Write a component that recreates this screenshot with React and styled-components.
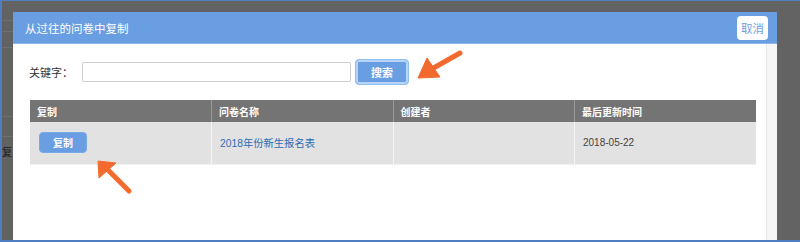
import React from "react";
import styled, { createGlobalStyle } from "styled-components";

const Global = createGlobalStyle`
  html, body { margin: 0; padding: 0; background: #636363; }
  body { font-family: "Liberation Sans", "Noto Sans CJK SC", sans-serif; }
  * { box-sizing: border-box; }
`;

const Frame = styled.div`
  position: relative;
  width: 800px;
  height: 242px;
  overflow: hidden;
  background: #636363;
  border-left: 2px solid #4f7fc2;
  border-top: 1px solid #4f7fc2;
  border-bottom: 2px solid #4f7fc2;
  display: flex;
  padding-top: 11px;
`;

const SideStrip = styled.div`
  width: 11px;
  flex: none;
  overflow: hidden;
  background:
    linear-gradient(to bottom,
      transparent 0px, transparent 8px, #6f6f6f 8px, #6f6f6f 9px,
      transparent 9px, transparent 19px, #6f6f6f 19px, #6f6f6f 20px,
      transparent 20px, transparent 35px, #6f6f6f 35px, #6f6f6f 36px,
      transparent 36px, transparent 104px, #6f6f6f 104px, #6f6f6f 105px,
      transparent 105px, transparent 124px, #6f6f6f 124px, #6f6f6f 125px,
      transparent 125px),
    #626262;
  padding-top: 132px;
`;

const BehindText = styled.div`
  font-size: 10px;
  font-weight: bold;
  color: #2a2a2a;
  white-space: nowrap;
  font-family: "Noto Sans CJK SC", sans-serif;
`;

const Modal = styled.div`
  width: 764px;
  height: 228px;
  background: #fff;
  display: flex;
  flex-direction: column;
  flex: none;
`;

const Header = styled.div`
  height: 32px;
  background: #6a9ee2;
  display: flex;
  align-items: center;
  justify-content: space-between;
  padding: 0 9px 0 12px;
  border-bottom: 1px solid #8db6ec;
`;

const Title = styled.div`
  color: #fff;
  font-size: 11.5px;
  font-family: "Noto Sans CJK SC", sans-serif;
`;

const CancelBtn = styled.button`
  background: #fff;
  border: none;
  border-radius: 4px;
  height: 24px;
  width: 31px;
  padding: 0;
  color: #6a9ee2;
  font-size: 11.5px;
  font-family: "Noto Sans CJK SC", sans-serif;
`;

const Body = styled.div`
  flex: 1;
  display: flex;
`;

const Content = styled.div`
  flex: 1;
  padding: 15px 10px 0 16px;
`;

const ScrollTrack = styled.div`
  width: 11px;
  background: #f6f6f6;
  border-left: 1px solid #e8e8e8;
`;

const SearchRow = styled.div`
  display: flex;
  align-items: center;
  height: 26px;
`;

const Label = styled.label`
  font-size: 11px;
  color: #333;
  font-family: "Noto Sans CJK SC", sans-serif;
  width: 53px;
`;

const Input = styled.input`
  width: 269px;
  height: 20px;
  border: 1px solid #d0d0d0;
  border-radius: 1px;
  padding: 0 4px;
  outline: none;
`;

const SearchBtn = styled.button`
  margin-left: 4px;
  width: 54px;
  height: 26px;
  border-radius: 4px;
  border: 1px solid #8fbff2;
  background: #6a9ee2;
  box-shadow: inset 0 0 0 2px #b7d6f7;
  color: #fff;
  font-size: 11px;
  font-weight: bold;
  font-family: "Noto Sans CJK SC", sans-serif;
  padding: 0;
`;

const Table = styled.table`
  margin-top: 15px;
  margin-left: 1px;
  width: 726px;
  border-collapse: collapse;
  table-layout: fixed;
  font-size: 10px;
`;

const Th = styled.th`
  background: #747474;
  color: #fff;
  text-align: left;
  font-weight: bold;
  height: 22px;
  padding: 0 7px;
  font-family: "Noto Sans CJK SC", sans-serif;
  border-left: 1px solid #9a9a9a;
  &:first-child { border-left: none; }
`;

const Td = styled.td`
  background: #e2e2e2;
  height: 42px;
  padding: 0 8px;
  color: #444;
  border-left: 1px solid #f4f4f4;
  border-bottom: 1px solid #f0f0f0;
  &:first-child { border-left: none; }
`;

const CopyBtn = styled.button`
  margin-left: 1px;
  width: 48px;
  height: 21px;
  border: 1px solid #7aaae6;
  border-radius: 4px;
  background: #6a9ee2;
  color: #fff;
  font-size: 10px;
  font-weight: bold;
  font-family: "Noto Sans CJK SC", sans-serif;
  padding: 0;
`;

const Link = styled.a`
  color: #2c6db3;
  text-decoration: none;
  font-size: 10.3px;
  font-family: "Liberation Sans", "Noto Sans CJK SC", sans-serif;
`;

const Arrow = styled.svg`
  position: absolute;
  left: 0;
  top: 0;
  pointer-events: none;
`;

export default function App() {
  return (
    <>
      <Global />
      <Frame>
        <SideStrip>
          <BehindText>复</BehindText>
        </SideStrip>
        <Modal>
          <Header>
            <Title>从过往的问卷中复制</Title>
            <CancelBtn>取消</CancelBtn>
          </Header>
          <Body>
            <Content>
              <SearchRow>
                <Label>关键字：</Label>
                <Input />
                <SearchBtn>搜索</SearchBtn>
              </SearchRow>
              <Table>
                <thead>
                  <tr>
                    <Th>复制</Th>
                    <Th>问卷名称</Th>
                    <Th>创建者</Th>
                    <Th>最后更新时间</Th>
                  </tr>
                </thead>
                <tbody>
                  <tr>
                    <Td>
                      <CopyBtn>复制</CopyBtn>
                    </Td>
                    <Td>
                      <Link href="#">2018年份新生报名表</Link>
                    </Td>
                    <Td />
                    <Td>2018-05-22</Td>
                  </tr>
                </tbody>
              </Table>
            </Content>
            <ScrollTrack />
          </Body>
        </Modal>
        <Arrow width="800" height="242" viewBox="0 0 800 242">
          <g fill="#f26a2e" stroke="#f26a2e" strokeLinejoin="round">
            <line x1="458" y1="52" x2="428" y2="69" strokeWidth="5" strokeLinecap="round" />
            <polygon points="416,77 425,57 438,76" strokeWidth="1" />
            <line x1="127" y1="190" x2="106" y2="169" strokeWidth="5" strokeLinecap="round" />
            <polygon points="96,160 97,177 114,162" strokeWidth="1" />
          </g>
        </Arrow>
      </Frame>
    </>
  );
}
